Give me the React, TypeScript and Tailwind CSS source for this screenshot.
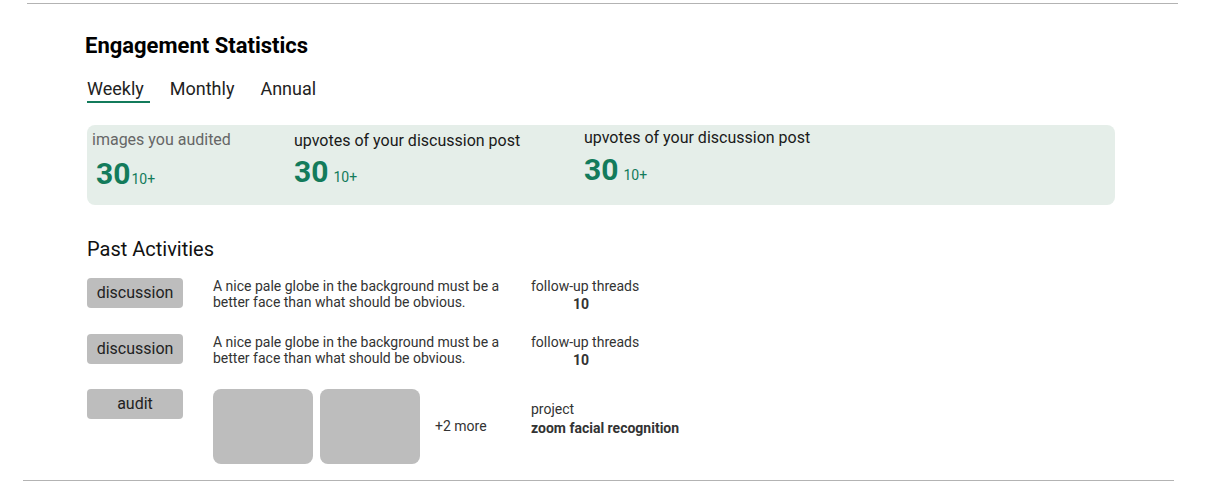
import React from 'react';

interface Stat {
  label: string;
  value: string;
  extra: string;
  labelClass: string;
  pad: string;
  numGap: string;
  numTop: string;
  width: string;
}

const STATS: Stat[] = [
  { label: 'images you audited', value: '30', extra: '10+', labelClass: 'text-[#666666]', pad: 'pt-[5px] pl-[5px]', numGap: 'gap-[1px] pl-[4px]', numTop: 'mt-[8px]', width: 'w-[207px]' },
  { label: 'upvotes of your discussion post', value: '30', extra: '10+', labelClass: 'text-[#1a1a1a]', pad: 'pt-[6px]', numGap: 'gap-[5px]', numTop: 'mt-[5px]', width: 'w-[290px]' },
  { label: 'upvotes of your discussion post', value: '30', extra: '10+', labelClass: 'text-[#1a1a1a]', pad: 'pt-[3px]', numGap: 'gap-[5px]', numTop: 'mt-[6px]', width: 'flex-1' },
];

const Tag = ({ children }: { children: React.ReactNode }) => (
  <div className="w-[96px] h-[30px] shrink-0 rounded-[4px] bg-[#bdbdbd] flex items-center justify-center text-[16px] text-[#222222]">
    {children}
  </div>
);

export default function App() {
  const tabs = ['Weekly', 'Monthly', 'Annual'];

  return (
    <div className="w-[1232px] h-[484px] bg-white overflow-hidden" style={{ fontFamily: 'Roboto, "Liberation Sans", sans-serif' }}>
      <div className="ml-[27px] mt-[3px] w-[1151px] h-px bg-[#b3b3b3]" />

      <div className="pl-[85px] mt-[28px]">
        <h1 className="text-[22px] leading-[28px] font-bold text-black">Engagement Statistics</h1>
      </div>

      <div className="pl-[87px] mt-[17px] flex gap-[20px]">
        {tabs.map((tab, i) => (
          <div
            key={tab}
            className={`text-[18px] leading-[24px] text-[#222222] pr-[6px] border-b-2 ${i === 0 ? 'border-[#137b5b]' : 'border-transparent'}`}
          >
            {tab}
          </div>
        ))}
      </div>

      <div className="ml-[87px] mt-[22px] w-[1028px] h-[80px] rounded-[8px] bg-[#e5eee9] flex">
        {STATS.map((s, i) => (
          <div key={i} className={`${s.width} ${s.pad} flex flex-col`}>
            <div className={`text-[16px] leading-[20px] ${s.labelClass}`}>{s.label}</div>
            <div className={`flex items-baseline ${s.numGap} ${s.numTop}`}>
              <span className="text-[30px] leading-[32px] font-bold text-[#137b5b]">{s.value}</span>
              <span className="text-[14px] text-[#137b5b]">{s.extra}</span>
            </div>
          </div>
        ))}
      </div>

      <div className="pl-[87px] mt-[32px] text-[20px] leading-[24px] text-[#111111]">Past Activities</div>

      <div className="pl-[87px] mt-[17px] flex flex-col">
        {[0, 1].map((i) => (
          <div key={i} className={`flex ${i === 0 ? 'h-[56px]' : 'h-[55px]'}`}>
            <Tag>discussion</Tag>
            <div className="ml-[30px] w-[318px] text-[14px] leading-[16px] text-[#333333]">
              A nice pale globe in the background must be a<br />
              better face than what should be obvious.
            </div>
            <div className="text-[14px] leading-[16px] text-[#333333]">
              <div>follow-up threads</div>
              <div className="mt-[2px] pl-[42px] font-bold">10</div>
            </div>
          </div>
        ))}

        <div className="flex h-[75px]">
          <Tag>audit</Tag>
          <div className="ml-[30px] flex items-center">
            <div className="w-[100px] h-[75px] rounded-[8px] bg-[#bdbdbd]" />
            <div className="ml-[7px] w-[100px] h-[75px] rounded-[8px] bg-[#bdbdbd]" />
            <div className="ml-[15px] w-[96px] text-[14px] text-[#333333]">+2 more</div>
          </div>
          <div className="pt-[12px] text-[14px] leading-[16px] text-[#333333]">
            <div>project</div>
            <div className="mt-[3px] font-bold">zoom facial recognition</div>
          </div>
        </div>
      </div>

      <div className="ml-[23px] mt-[16px] w-[1151px] h-px bg-[#b3b3b3]" />
    </div>
  );
}
